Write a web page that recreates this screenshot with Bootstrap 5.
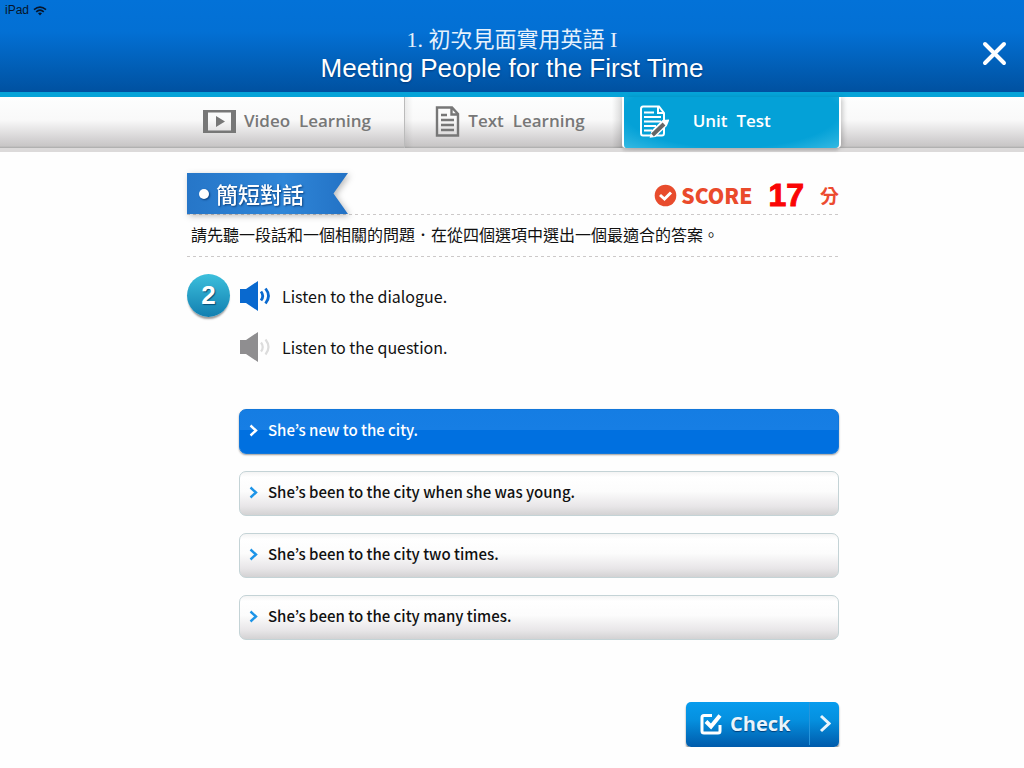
<!DOCTYPE html>
<html lang="zh-Hant">
<head>
<meta charset="utf-8">
<meta name="viewport" content="width=device-width, initial-scale=1">
<title>Meeting People for the First Time</title>
<link href="https://cdn.jsdelivr.net/npm/bootstrap@5.3.0/dist/css/bootstrap.min.css" rel="stylesheet">
<style>
body{font-family:"Noto Sans CJK TC",sans-serif;background:#fefefe;color:#111}
.unit-head{height:97px;border-bottom:5px solid #05a3d8;background:linear-gradient(#0372d8 0%,#0370d4 35%,#0051a0 100%);color:#fff}
.status{top:4px;left:5px;font:12px/13px "Liberation Sans",sans-serif;color:#06152a}
.title-zh{font:22px/26px "Liberation Serif","Noto Sans CJK TC",serif;margin:0;padding-top:27px;color:#e6f1fc}
.title-en{font:26px/30px "Liberation Sans","Noto Sans CJK TC",sans-serif;margin:0;text-shadow:0 1px 2px #003a7c}
.close-x{right:16px;top:40px}
.tab-strip{height:55px;border-bottom:4px solid #dcdada;background:linear-gradient(#fdfefe 0%,#f9f9f9 45%,#d2d0d1 85%,#c8c6c6 96%,#aaa 100%) padding-box}
.lane{max-width:652px;width:100%;margin:0 auto;position:relative;left:1px}
.tab-link{height:51px;color:#777;font:600 17px/24px "Open Sans",sans-serif;text-decoration:none;white-space:pre;padding-bottom:3px}
.tab-text{padding-left:30px;border-left:1px solid #bbb;background:linear-gradient(90deg,#0001,#0000 8px,#0000 calc(100% - 10px),#0002)}
.tab-on{color:#fff;background:radial-gradient(ellipse at 50% 30%,#04a1d7 70%,#35b9e2 100%);border-radius:0 0 4px 4px;border-left:2px solid #fff;box-shadow:2px 0 0 #fff,5px 0 5px -1px #0003,0 3px 3px #0002}
.main-lane{padding-top:21px}
.section-head{height:42px}
.ruled{background:repeating-linear-gradient(90deg,#ccc9c9 0 3px,#0000 3px 6px) bottom/100% 1px no-repeat}
.ribbon{width:161px;height:41px;background:linear-gradient(90deg,#2676c8,#2f86d8 60%,#2372c5);clip-path:polygon(0 0,100% 0,91% 50%,100% 100%,0 100%);padding:0 0 0 12px;color:#fff}
.ribbon-wrap{filter:drop-shadow(2px 2px 3px #0004)}
.ribbon h2{font-size:22px;line-height:40px;font-weight:500;margin:0;padding-bottom:2px;text-shadow:1px 1px 2px #0b3f7c}
.bullet{width:10px;height:10px;margin-right:7px;background:#fff;box-shadow:1px 1px 2px #0b3f7c}
.score-label{font:900 21px/34px "Noto Sans CJK TC",sans-serif;color:#ea4a2b}
.score-num{font:bold 32px/36px "Liberation Sans",sans-serif;color:#fa0505;-webkit-text-stroke:1px #fa0505}
.score-unit{font-size:19px;line-height:34px;font-weight:700;color:#ec4b30}
.hint{font-size:16px;line-height:38px;height:42px;padding-left:4px;margin:0;white-space:nowrap}
.question{padding-top:17px;gap:9px}
.q-num{width:43px;height:43px;background:linear-gradient(#3cbfdc,#127fb0);box-shadow:0 3px 2px -1px #999;color:#fff;font:bold 26px/42px "Liberation Sans",sans-serif;text-shadow:1px 1px 1px #075078}
.listen{height:43px;border:0;background:none;padding:0 0 0 1px;color:#111;font:400 16px/24px "Noto Sans CJK KR",sans-serif;gap:11px}
.choices{margin-top:41px;gap:17px}
.choice{height:45px;border:1px solid #c4d3d6;border-radius:7px;background:linear-gradient(#f4f4f4 0,#fff 12%,#fcfcfc 45%,#e8e6e8 80%,#d3d2d3 100%);font:500 15px/24px "Noto Sans CJK KR",sans-serif;color:#111;padding:0 0 3px 9px;gap:10px;text-align:left}
.choice svg{color:#1c94e8}
.choice.picked{background:linear-gradient(#157de3 0,#177ee4 46%,#0070e0 47%,#0070e0 100%);border-color:#1277da;color:#fff;box-shadow:0 1px 2px #0006}
.choice.picked svg{color:#fff}
.actions{margin-top:62px}
.check-btn{width:153px;height:45px;border:0;border-radius:5px;background:linear-gradient(#079cee 0,#0590df 40%,#005bab 100%);box-shadow:0 2px 2px #0007;color:#e9f4fc;font:700 20px/26px "Open Sans",sans-serif;padding:0 0 2px 14px;text-shadow:0 1px 1px #00407c}
.check-arrow{width:30px;height:43px;border-left:1px solid #2795dc}
</style>
</head>
<body>
<header class="unit-head position-relative text-center">
  <div class="status position-absolute d-flex align-items-center gap-1">iPad
    <svg width="14" height="10" viewBox="0 0 14 10" fill="none" stroke="currentColor" stroke-width="1.6"><path d="M1 3.7Q7-1.6 13 3.7M3.2 5.9Q7 2.4 10.8 5.9"/><path d="M5 7.3Q7 5.7 9 7.3L7 9.6Z" fill="currentColor" stroke="none"/></svg>
  </div>
  <p class="title-zh">1. 初次見面實用英語 I</p>
  <h1 class="title-en">Meeting People for the First Time</h1>
  <button class="close-x position-absolute btn p-0 border-0 d-flex" aria-label="Close">
    <svg width="27" height="27" viewBox="0 0 27 27" stroke="#fff" stroke-width="4" stroke-linecap="round"><path d="M4 4 23 23M23 4 4 23"/></svg>
  </button>
</header>
<nav class="tab-strip">
  <div class="lane row g-0">
    <a href="#video" class="tab-link col-4 d-flex align-items-center ps-3">
      <svg class="me-2" width="33" height="23" viewBox="0 0 33 23"><path fill="#777" fill-rule="evenodd" d="M0 0H33V23H0ZM5 2.5V20.500H28V2.500ZM13 6 22 11.500 13 17Z"/></svg>Video  Learning</a>
    <a href="#text" class="tab-link tab-text col-4 d-flex align-items-center">
      <svg class="me-2" width="25" height="31" viewBox="0 0 25 31" fill="none" stroke="#777" stroke-width="2.400"><path d="M2 1.500H17L23 8V29.500H2ZM16.500 2V8.500H23M6 9H12M6 14H19M6 19H19M6 24H19"/></svg>Text  Learning</a>
    <a href="#test" class="tab-link tab-on col-4 d-flex align-items-center ps-3" aria-current="page">
      <svg class="me-4" width="29" height="33" viewBox="0 0 29 33" fill="none" stroke="#fff" stroke-width="2"><path d="M19 1.500H3Q1 1.500 1 4V28Q1 30.500 3 30.500H22Q24 30.500 24 28V8ZM18 2V8H24M4 7.500H14M4 12H21M4 16.500H21M4 21H16M4 25.500H12"/><path d="M11 31.500 12.500 26 23 16 28 15.500 26 20.500 15 31Z" fill="#fff"/><path d="M12.500 30 24 19" stroke="#666" stroke-width="4"/></svg>Unit  Test</a>
  </div>
</nav>
<main class="lane main-lane">
  <div class="section-head ruled d-flex justify-content-between align-items-start">
    <div class="ribbon-wrap"><div class="ribbon d-flex align-items-center"><span class="bullet rounded-circle"></span><h2>簡短對話</h2></div></div>
    <div class="d-flex align-items-center pt-1">
      <svg class="me-1" width="23" height="23" viewBox="0 0 23 23"><circle cx="11.500" cy="11.500" r="10.800" fill="#e84c2d"/><path d="M6 11 10.500 15 17 8.500" fill="none" stroke="#fff" stroke-width="3"/></svg>
      <span class="score-label">SCORE</span>
      <span class="score-num ms-3 me-3">17</span>
      <span class="score-unit">分</span>
    </div>
  </div>
  <p class="hint ruled">請先聽一段話和一個相關的問題．在從四個選項中選出一個最適合的答案。</p>
  <div class="question d-flex" lang="en">
    <div class="q-num rounded-circle text-center flex-shrink-0">2</div>
    <div class="flex-grow-1">
      <button class="listen d-flex align-items-center">
        <svg width="31" height="30" viewBox="0 0 31 30"><path fill="#0969cf" d="M0 8H6L18 0V30L6 22H0Z"/><path d="M21 10.500Q24.500 15 21 19.500M25.500 7.500Q31.500 15 25.500 22.500" fill="none" stroke="#0969cf" stroke-width="2.800"/></svg>Listen to the dialogue.</button>
      <button class="listen d-flex align-items-center mt-2">
        <svg width="31" height="30" viewBox="0 0 31 30"><path fill="#8f8e90" d="M0 8H6L18 0V30L6 22H0Z"/><path d="M21 10.500Q24.500 15 21 19.500M25.500 7.500Q31.500 15 25.500 22.500" fill="none" stroke="#dcdcdc" stroke-width="2.200"/></svg>Listen to the question.</button>
      <div class="d-grid choices">
        <button class="choice picked d-flex align-items-center"><svg width="9" height="13" viewBox="0 0 9 13" fill="none" stroke="currentColor" stroke-width="2.400"><path d="M1.500 1.500 7 6.500 1.500 11.500"/></svg>She’s new to the city.</button>
        <button class="choice d-flex align-items-center"><svg width="9" height="13" viewBox="0 0 9 13" fill="none" stroke="currentColor" stroke-width="2.400"><path d="M1.500 1.500 7 6.500 1.500 11.500"/></svg>She’s been to the city when she was young.</button>
        <button class="choice d-flex align-items-center"><svg width="9" height="13" viewBox="0 0 9 13" fill="none" stroke="currentColor" stroke-width="2.400"><path d="M1.500 1.500 7 6.500 1.500 11.500"/></svg>She’s been to the city two times.</button>
        <button class="choice d-flex align-items-center"><svg width="9" height="13" viewBox="0 0 9 13" fill="none" stroke="currentColor" stroke-width="2.400"><path d="M1.500 1.500 7 6.500 1.500 11.500"/></svg>She’s been to the city many times.</button>
      </div>
    </div>
  </div>
  <div class="actions d-flex justify-content-end">
    <button class="check-btn d-flex align-items-center">
      <svg class="me-2" width="22" height="22" viewBox="0 0 22 22" fill="none" stroke="#fff" stroke-width="3"><path d="M12 2.500H4Q2 2.500 2 4.500V18Q2 20 4 20H18Q20 20 20 18V12"/><path d="M6 8.500 11 13.500 20 2.500" stroke-width="4"/></svg>Check
      <span class="check-arrow ms-auto d-flex align-items-center justify-content-center"><svg width="12" height="19" viewBox="0 0 12 19" fill="none" stroke="#e9f4fc" stroke-width="3"><path d="M2 2 10 9.500 2 17"/></svg></span>
    </button>
  </div>
</main>
<script src="https://cdn.jsdelivr.net/npm/bootstrap@5.3.0/dist/js/bootstrap.bundle.min.js"></script>
</body>
</html>
